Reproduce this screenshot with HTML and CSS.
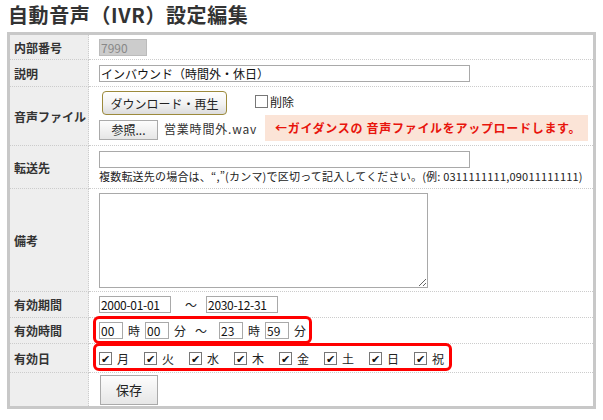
FILE: index.html
```html
<!DOCTYPE html>
<html lang="ja">
<head>
  <meta charset="UTF-8" />
  <title>自動音声(IVR)設定編集</title>
  <link rel="stylesheet" href="styles.css">
</head>
<body>
  <h1 class="title">自動音声（IVR）設定編集</h1>

  <table class="form">
    <tr class="r-ext">
      <th>内部番号</th>
      <td><input class="txt ro" type="text" value="7990" readonly></td>
    </tr>
    <tr class="r-desc">
      <th>説明</th>
      <td><input class="txt wide" type="text" value="インバウンド（時間外・休日）"></td>
    </tr>
    <tr class="r-file">
      <th>音声ファイル</th>
      <td>
        <div class="line1">
          <button class="btn-gold" type="button">ダウンロード・再生</button>
          <label class="del"><span class="box"></span>削除</label>
        </div>
        <div class="line2">
          <button class="btn" type="button">参照...</button>
          <span class="fname">営業時間外.wav</span>
          <span class="note">←ガイダンスの 音声ファイルをアップロードします。</span>
        </div>
      </td>
    </tr>
    <tr class="r-fwd">
      <th>転送先</th>
      <td>
        <input class="txt wide" type="text" value="">
        <div class="help">複数転送先の場合は、“,”(カンマ)で区切って記入してください。(例: 0311111111,09011111111)</div>
      </td>
    </tr>
    <tr class="r-memo">
      <th>備考</th>
      <td><textarea class="memo"></textarea></td>
    </tr>
    <tr class="r-period">
      <th>有効期間</th>
      <td>
        <div class="inline">
          <input class="txt date" type="text" value="2000-01-01">
          <span class="tilde">～</span>
          <input class="txt date" type="text" value="2030-12-31">
        </div>
      </td>
    </tr>
    <tr class="r-time">
      <th>有効時間</th>
      <td>
        <div class="marked">
          <div class="inline">
            <input class="txt num" type="text" value="00"><span class="unit">時</span>
            <input class="txt num" type="text" value="00"><span class="unit">分</span>
            <span class="tilde">～</span>
            <input class="txt num" type="text" value="23"><span class="unit">時</span>
            <input class="txt num" type="text" value="59"><span class="unit">分</span>
          </div>
          <span class="mark mark-time"></span>
        </div>
      </td>
    </tr>
    <tr class="r-days">
      <th>有効日</th>
      <td>
        <div class="marked">
          <div class="days">
            <label class="day"><span class="box on">✔</span>月</label>
            <label class="day"><span class="box on">✔</span>火</label>
            <label class="day"><span class="box on">✔</span>水</label>
            <label class="day"><span class="box on">✔</span>木</label>
            <label class="day"><span class="box on">✔</span>金</label>
            <label class="day"><span class="box on">✔</span>土</label>
            <label class="day"><span class="box on">✔</span>日</label>
            <label class="day"><span class="box on">✔</span>祝</label>
          </div>
          <span class="mark mark-days"></span>
        </div>
      </td>
    </tr>
    <tr class="r-save">
      <th></th>
      <td><button class="btn save" type="button">保存</button></td>
    </tr>
  </table>
</body>
</html>
```

FILE: styles.css
```css
* {
  box-sizing: border-box;
}

body {
  margin: 0;
  padding: 0 7px;
  background: #fff;
  color: #222;
  font-family: "Noto Sans CJK JP", "DejaVu Sans", sans-serif;
  font-size: 12px;
}

.title {
  margin: 0;
  height: 32px;
  padding-top: 1px;
  padding-left: 1px;
  font-size: 20px;
  line-height: 28px;
  font-weight: bold;
  color: #333;
  letter-spacing: 0.6px;
}

.form {
  width: 589px;
  border-collapse: collapse;
  border: 3px solid #c8c8c8;
}

.form th,
.form td {
  padding: 0;
  border-bottom: 1px dotted #ccc;
  vertical-align: middle;
}

.form th {
  width: 80px;
  padding-left: 4px;
  background: #eee;
  border-right: 1px dotted #ccc;
  text-align: left;
  font-size: 12px;
  font-weight: bold;
  color: #333;
}

.form td {
  padding-left: 10px;
}

.r-ext { height: 26px; }
.r-desc { height: 27px; }
.r-file { height: 59px; }
.r-fwd { height: 43px; }
.r-memo { height: 103px; }
.r-period { height: 26px; }
.r-time { height: 26px; }
.r-days { height: 29px; }
.r-save { height: 35px; }

.r-save th,
.r-save td {
  border-bottom: none;
}

.txt {
  display: block;
  height: 17px;
  margin: 0;
  padding: 0 1px;
  border: 1px solid #a9a9a9;
  font-family: "Noto Sans CJK JP", "DejaVu Sans", sans-serif;
  font-size: 12px;
  line-height: 15px;
  color: #111;
  background: #fff;
}

.ro {
  width: 48px;
  background: #ccc;
  color: #888;
  border-color: #bbb;
}

.wide {
  width: 371px;
}

.line1 {
  display: flex;
  align-items: flex-start;
  padding-left: 3px;
}

.btn-gold {
  width: 125px;
  height: 24px;
  border: 1px solid #9c8a3c;
  border-radius: 4px;
  background: linear-gradient(#fff, #f2f2f2 55%, #dcdcdc);
  font-family: "Noto Sans CJK JP", sans-serif;
  font-size: 12px;
  color: #222;
  padding: 0;
}

.del {
  display: flex;
  align-items: center;
  margin-left: 28px;
  margin-top: 2px;
  gap: 2px;
}

.box {
  display: inline-flex;
  align-items: center;
  justify-content: center;
  width: 13px;
  height: 13px;
  border: 1px solid #777;
  background: #fff;
  font-size: 11px;
  line-height: 1;
  color: #111;
}

.line2 {
  display: flex;
  align-items: center;
}

.btn {
  height: 20px;
  border: 1px solid #aaa;
  background: linear-gradient(#fdfdfd, #e6e6e6);
  font-family: "Noto Sans CJK JP", sans-serif;
  font-size: 12px;
  color: #222;
  padding: 0 8px;
}

.line2 .btn {
  width: 59px;
  margin-top: 3px;
}

.fname {
  width: 101px;
  margin-left: 6px;
  font-size: 12px;
  letter-spacing: 0.8px;
  color: #333;
  white-space: nowrap;
}

.note {
  width: 323px;
  height: 26px;
  padding-left: 10px;
  line-height: 26px;
  background: #fbe4d7;
  color: #e8140c;
  font-weight: bold;
  font-size: 12px;
  letter-spacing: 0.7px;
  white-space: nowrap;
}

.help {
  margin-top: 1px;
  font-size: 11px;
  line-height: 14px;
  color: #222;
  white-space: nowrap;
  letter-spacing: 0.2px;
}

.memo {
  display: block;
  width: 329px;
  height: 95px;
  margin: 0;
  border: 1px solid #a9a9a9;
}

.inline {
  display: flex;
  align-items: center;
}

.date {
  width: 72px;
  letter-spacing: -0.3px;
}

.r-period .tilde {
  margin: 0 9px 0 14px;
}

.num {
  width: 24px;
}

.unit {
  margin: 0 5px 0 5px;
}

.r-time .tilde {
  margin: 0 12px 0 4px;
}

.marked {
  position: relative;
}

.mark {
  position: absolute;
  border: 3px solid #f00;
  border-radius: 6px;
  pointer-events: none;
}

.mark-time {
  left: -6px;
  top: -6px;
  width: 219px;
  height: 28px;
}

.mark-days {
  left: -6px;
  top: -7px;
  width: 359px;
  height: 28px;
}

.days {
  display: flex;
  align-items: center;
}

.day {
  display: flex;
  align-items: center;
  width: 45px;
  gap: 5px;
  font-size: 12px;
}

.save {
  width: 58px;
  height: 30px;
  margin-left: 1px;
  font-size: 13px;
}
```
